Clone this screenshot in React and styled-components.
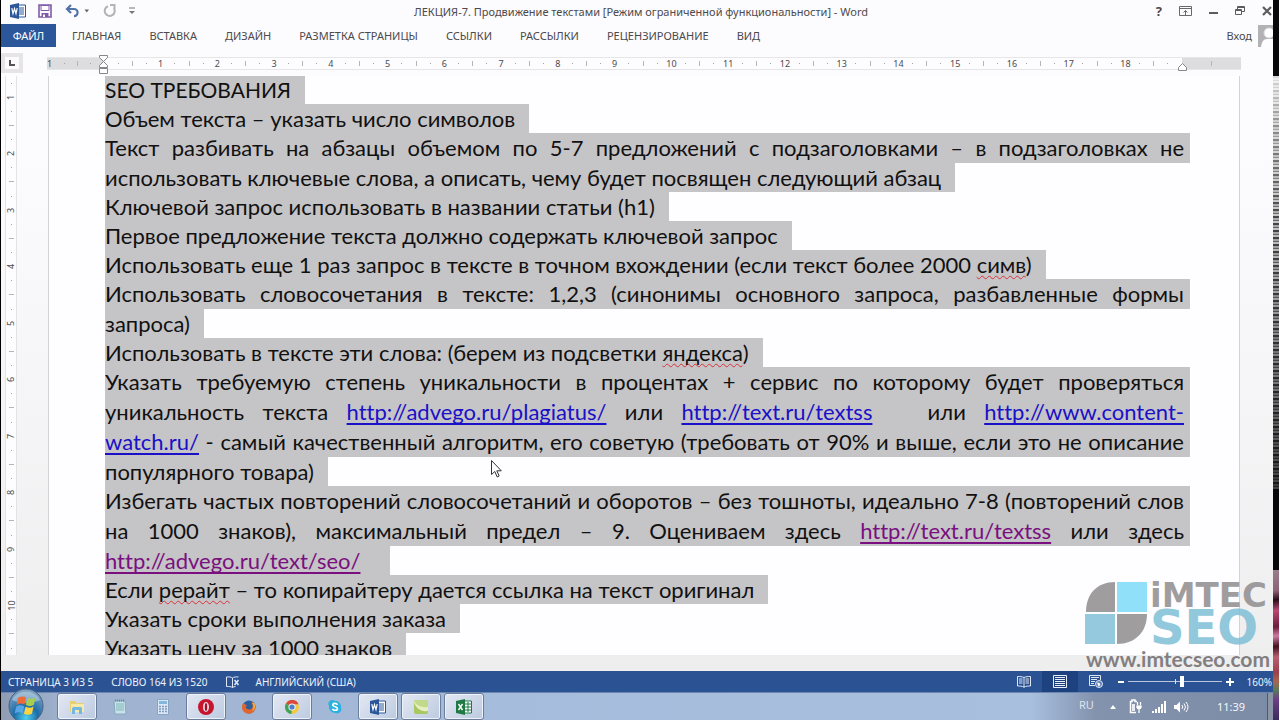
import styled, { createGlobalStyle, css } from "styled-components";

const GlobalStyle = createGlobalStyle`
  * { box-sizing: border-box; }
  body {
    margin: 0;
    background: #fff;
    font-family: "Noto Sans", "Open Sans", sans-serif;
    font-size: 11px;
    color: #4c4a4c;
  }
  button { font: inherit; color: inherit; border: 0; padding: 0; background: none; }
  svg { display: block; flex: none; }
`;

const Desktop = styled.div`
  display: flex;
  height: 100vh;
  min-height: 480px;
  padding-right: 1px;
  overflow: hidden;
`;
const Screen = styled.div`
  position: relative;
  flex: 1;
  min-width: 0;
  display: flex;
  flex-direction: column;
  border-left: 1px solid #000;
  background: linear-gradient(#fcfbfd 20%, #efeeef 92%);
  overflow: hidden;
`;
const Wallpaper = styled.div`
  flex: none;
  width: 6px;
  display: flex;
  flex-direction: column;
  background: #08080a;
`;
const Noise = styled.div`
  height: 413px;
  margin-top: 76px;
  background:
    linear-gradient(#fffc 0, #fff6 12%, #fff0 35%, #0003 55%, #000a 100%),
    repeating-linear-gradient(#444 0 2px, #a9a9a9 2px 4px, #666 4px 5px, #c5c5c5 5px 7px),
    #888;
`;
const Flower = styled.div`
  flex: 1;
  margin-top: 81px;
  background: linear-gradient(
    172deg,
    #9a7f8c 0, #8b6275 14%, #2a0d18 20%, #b9486f 27%, #6d1c3a 38%, #d07aa0 44%,
    #43101f 51%, #b8606f 58%, #9c3f4c 68%, #a8664f 74%, #5c7a58 80%, #6b3f86 86%, #3b2a5b 100%
  );
`;

/* title bar */
const TitleBar = styled.header`
  flex: none;
  height: 24px;
  display: flex;
  align-items: center;
  padding: 0 1px 2px 9px;
`;
const QuickAccess = styled.div`
  flex: 1;
  display: flex;
  align-items: center;
`;
const QuickButton = styled.button`
  margin-right: ${(p) => p.$gap || 12}px;
`;
const Title = styled.h1`
  margin: 0;
  font-size: 11px;
  font-weight: 400;
  white-space: nowrap;
`;
const WindowButtons = styled.div`
  flex: 1;
  display: flex;
  justify-content: flex-end;
  align-items: center;
  gap: 17px;
`;
const HelpButton = styled.button`
  font-size: 13px;
  font-weight: 700;
`;

/* ribbon tabs */
const Tabs = styled.nav`
  flex: none;
  height: 23px;
  display: flex;
  align-items: stretch;
`;
const FileTab = styled.button`
  width: 55px;
  margin-right: 2px;
  padding-bottom: 1px !important;
  background: #2b579a !important;
  color: #fff !important;
`;
const Tab = styled.button`
  padding: 0 14px 1px !important;
  white-space: nowrap;
`;
const SignIn = styled.button`
  margin-left: auto;
  display: flex;
  align-items: center;
  gap: 6px;
`;

/* rulers */
const RulerRow = styled.div`
  flex: none;
  height: 29px;
  display: flex;
  align-items: center;
  padding: 3px 32px 0 0;
`;
const TabSelector = styled.button`
  width: 22px;
  height: 20px;
  margin-right: 24px;
  border: 4px solid #e6e4e6 !important;
  background: #fbfafc !important;
  display: flex;
  align-items: center;
  justify-content: center;
`;
const Ruler = styled.div`
  position: relative;
  flex: 1;
  height: 13px;
  display: flex;
  border: 1px solid #e6e5e8;
  border-width: 1px 0;
  font-size: 9px;
`;
const Margin = styled.div`
  width: ${(p) => p.$w}px;
  display: flex;
  justify-content: ${(p) => (p.$left ? "space-between" : "space-around")};
  padding-right: ${(p) => (p.$left ? 13 : 0)}px;
  align-items: center;
  background: #dddcde;
`;
const Scale = styled.div`
  flex: 1;
  display: flex;
  align-items: center;
  padding: 0 7px;
  background: #fdfcfe;
`;
const Mark = styled.span`
  flex: 1 1 0;
  min-width: 0;
  min-height: 0;
  display: flex;
  align-items: center;
  justify-content: center;
  line-height: 11px;
`;
const Tick = styled.i`
  display: block;
  width: 1px;
  height: 5px;
  background: #b5b4b7;
  ${(p) => p.$dot && css`height: 1px; background: #a3a2a5;`}
`;
const Indents = styled.svg`
  position: absolute;
  left: ${(p) => p.$left};
  right: ${(p) => p.$right};
  top: ${(p) => p.$top}px;
`;
const Workspace = styled.main`
  flex: 1;
  min-height: 0;
  display: flex;
  padding-right: 33px;
`;
const SideRuler = styled.div`
  width: 12px;
  margin: 0 31px 0 4px;
  display: flex;
  flex-direction: column;
  align-items: center;
  border: 1px solid #e3e2e5;
  border-width: 0 1px;
  background: #fdfcfe;
  font-size: 9px;
`;
const Upright = styled.span`
  transform: rotate(-90deg);
`;

/* document */
const Page = styled.article`
  position: relative;
  flex: 1;
  min-width: 0;
  padding: 0 49px 0 56px;
  border: 1px solid #d3d2d5;
  border-width: 0 1px;
  background: #fefdff;
  font-family: Lato, sans-serif;
  font-size: 22px;
  font-variant-ligatures: none;
  color: #111;
  overflow: hidden;
`;
const Paragraph = styled.p`
  margin: 0;
`;
const Line = styled.span`
  display: block;
  width: fit-content;
  padding-right: ${(p) => p.$tail || 14}px;
  line-height: 29px;
  white-space: nowrap;
  background: #c5c4c6;
  ${(p) => p.$heading && css`font-size: 21px; line-height: 28px;`}
  ${(p) =>
    p.$full &&
    css`
      width: auto;
      padding-right: 6px;
      line-height: 30px;
      text-align: justify;
      text-align-last: justify;
    `}
`;
const Link = styled.a`
  color: ${(p) => (p.$visited ? "#7a0f80" : "#1a10c8")};
  text-decoration: underline 2px;
  text-underline-offset: 3px;
  text-decoration-skip-ink: none;
`;
const Typo = styled.span`
  text-decoration: underline wavy #d8323c 1px;
  text-underline-offset: 2px;
  text-decoration-skip-ink: none;
`;
const Pointer = styled.svg`
  position: absolute;
  left: 442px;
  top: 384px;
`;

/* logo over the corner of the page */
const Watermark = styled.div`
  position: absolute;
  left: calc(100% - 188px);
  bottom: 48px;
  width: 188px;
  color: #6f6c6d;
  font-weight: 700;
  white-space: nowrap;
  opacity: 0.85;
`;
const Brand = styled.div`
  display: flex;
  gap: 3px;
`;
const BrandName = styled.div`
  font-family: "DejaVu Sans", sans-serif;
  font-size: 34px;
  line-height: 26px;
  color: #8f8d8e;
`;
const BrandSeo = styled.div`
  font-size: 48px;
  line-height: 38px;
  color: #80bfd6;
`;
const BrandUrl = styled.div`
  padding-left: 1px;
  font-family: Lato, sans-serif;
  font-size: 21px;
  line-height: 26px;
`;

/* status bar */
const StatusSpace = styled.div`
  flex: none;
  height: 16px;
`;
const StatusBar = styled.footer`
  flex: none;
  height: 21px;
  display: flex;
  align-items: center;
  padding-left: 7px;
  background: #2b5394;
  color: #eef2fa;
  font-size: 10px;
  white-space: nowrap;
`;
const StatusItem = styled.button`
  margin-right: ${(p) => p.$gap || 18}px;
`;
const Language = styled(StatusItem)`
  margin-right: auto;
`;
const ViewButton = styled.button`
  width: 36px;
  height: 21px;
  display: flex;
  align-items: center;
  justify-content: center;
  background: ${(p) => (p.$active ? "#1e427f" : "none")} !important;
`;
const ZoomGroup = styled.div`
  display: flex;
  align-items: center;
  gap: 4px;
  margin-left: 4px;
`;
const ZoomSlider = styled.input`
  appearance: none;
  width: 94px;
  height: 12px;
  margin: 0;
  background:
    linear-gradient(#dbe3f1, #dbe3f1) 47px 50% / 1px 5px no-repeat,
    linear-gradient(#b9c8e0, #b9c8e0) 0 50% / 100% 1px no-repeat;
  &::-webkit-slider-thumb {
    appearance: none;
    width: 4px;
    height: 11px;
    background: #fff;
  }
`;
const ZoomValue = styled.button`
  width: 39px;
  padding-right: 1px !important;
  text-align: right;
`;

/* taskbar */
const Taskbar = styled.div`
  flex: none;
  height: 28px;
  display: flex;
  align-items: stretch;
  border-top: 1px solid #6d86ad;
  background: linear-gradient(90deg, #8f9db3 0, #9fb2cf 5%, #a6bcdc 40%, #a8bfde 81%, #8393ae 86%, #7c8ba6 100%);
`;
const StartButton = styled.button`
  align-self: flex-start;
  width: 52px;
  margin: -5px 4px 0 0;
  padding-left: 7px !important;
`;
const TaskButton = styled.button`
  width: 40px;
  margin-right: 3px;
  display: flex;
  align-items: center;
  justify-content: center;
  border-radius: 3px;
  ${(p) =>
    p.$open &&
    css`
      border: 1px solid #6a7d9c !important;
      background: linear-gradient(135deg, #e3e8f3, #bccae0) !important;
      box-shadow: inset 0 0 0 1px #eef2f9;
    `}
`;
const Tray = styled.div`
  margin-left: auto;
  display: flex;
  align-items: center;
  color: #f3f6fb;
`;
const InputLanguage = styled.button`
  margin-right: 16px;
  padding-bottom: 5px !important;
  color: #dde3ee !important;
`;
const TrayButton = styled.button`
  margin-right: ${(p) => p.$gap}px;
`;
const ShowDesktop = styled.button`
  align-self: stretch;
  width: 6px;
  border-left: 1px solid #4d5a70 !important;
  background: #8c95a6 !important;
`;

const tabs = ["ГЛАВНАЯ", "ВСТАВКА", "ДИЗАЙН", "РАЗМЕТКА СТРАНИЦЫ", "ССЫЛКИ", "РАССЫЛКИ", "РЕЦЕНЗИРОВАНИЕ", "ВИД"];

// four marks per centimetre: quarter dot, half tick, quarter dot, number
const markAt = (q) => (q % 4 === 0 ? q / 4 : q % 2 === 0 ? "tick" : "dot");
const topMarks = Array.from({ length: 75 }, (_, i) => markAt(i + 1));
const sideMarks = Array.from({ length: 41 }, (_, i) => markAt(i + 3));

const WordIcon = ({ size = 16 }) => (
  <svg width={size} height={size} viewBox="0 0 16 16">
    <path d="M8 2h7.5v12H8z" fill="#fff" stroke="#2b579a" />
    <path d="M9 5h5M9 7h5M9 9h5M9 11h5" stroke="#2b579a" />
    <path d="M0 2l9-2v16l-9-2z" fill="#2b579a" />
    <path d="M1.8 5.2l1.2 5.4 1.5-5 1.5 5 1.2-5.4" fill="none" stroke="#fff" strokeWidth="1.2" />
  </svg>
);
const ExcelIcon = () => (
  <svg width="16" height="16" viewBox="0 0 16 16">
    <path d="M8 2h7.5v12H8z" fill="#fff" stroke="#1f7a45" />
    <path d="M9 5h6M9 8h6M9 11h6M12 3v10" stroke="#1f7a45" />
    <path d="M0 2l9-2v16l-9-2z" fill="#1f7a45" />
    <path d="M2.5 5l4 6M6.5 5l-4 6" stroke="#fff" strokeWidth="1.4" />
  </svg>
);
const SaveIcon = () => (
  <svg width="14" height="14" viewBox="0 0 14 14">
    <path d="M1 1h12v12H1z" fill="#fff" stroke="#7f5aa8" strokeWidth="1.6" />
    <path d="M3 1.5h8v5H3z" fill="#fff" stroke="#7f5aa8" />
    <path d="M3.5 9h7v4h-7z" fill="#7f5aa8" />
    <path d="M5 10.5h2V13H5z" fill="#fff" />
  </svg>
);
const UndoIcon = () => (
  <svg width="24" height="14" viewBox="0 0 24 14" fill="none">
    <path d="M6 1L2 5l4 4M2.500 5H9a3.600 3.600 0 0 1 0 7.200" stroke="#5273a8" strokeWidth="2.200" />
    <path d="M19.500 5.500h4.500l-2.200 3z" fill="#666" />
  </svg>
);
const RedoIcon = () => (
  <svg width="14" height="14" viewBox="0 0 14 14" fill="none" stroke="#b3b2b5" strokeWidth="2">
    <path d="M5 2.200A5 5 0 1 0 10.800 4M7 1h4.500v4.500" />
  </svg>
);
const CustomizeIcon = () => (
  <svg width="6" height="8" viewBox="0 0 6 8">
    <path d="M0 1h6" stroke="#777" />
    <path d="M0 4h6L3 7z" fill="#777" />
  </svg>
);
const RibbonIcon = () => (
  <svg width="13" height="10" viewBox="0 0 13 10" fill="none" stroke="#6a686b">
    <path d="M.5.5h12v9H.5zM.5 2.500h12M6.500 9V4.500M4.500 6.500l2-2 2 2" />
  </svg>
);
const MinimizeIcon = () => (
  <svg width="9" height="9" viewBox="0 0 9 9"><path d="M0 6h9" stroke="#5d5b5e" strokeWidth="2" /></svg>
);
const RestoreIcon = () => (
  <svg width="10" height="10" viewBox="0 0 10 10" fill="none" stroke="#5d5b5e">
    <path d="M.5 3.500h6v5h-6zM.5 4.500h6M2.500 3V.500h7v5H7M2.500 1.500h7" />
  </svg>
);
const CloseIcon = () => (
  <svg width="10" height="10" viewBox="0 0 10 10"><path d="M1 1l8 8M9 1L1 9" stroke="#5d5b5e" strokeWidth="2.200" /></svg>
);
const AvatarIcon = () => (
  <svg width="15" height="22" viewBox="0 0 15 22">
    <path d="M0 0h15v22H0z" fill="#fdfcfe" />
    <path d="M0 0h15v14H9c-4 0-5 3-6 8H0z" fill="#b2b1b4" />
    <circle cx="11" cy="8" r="5" fill="#fff" stroke="#dcdbdd" />
  </svg>
);
const ProofIcon = () => (
  <svg width="14" height="12" viewBox="0 0 14 12" fill="none" stroke="#dfe7f4">
    <path d="M6.500 2C5 .8 3 .8.5 1v9.500c2.500 0 4.500 0 6 1zM6.500 2C8 .8 10 .8 12.500 1M6.500 11.500c1-.6 2-1 3-1" />
    <path d="M8.500 4l4 5M12.500 4l-4 5" strokeWidth="1.500" />
  </svg>
);
const ReadIcon = () => (
  <svg width="14" height="12" viewBox="0 0 14 12" fill="none" stroke="#dfe7f4">
    <path d="M7 1.500C5 .5 3 .5.5.5v9.500c2.500 0 4.500 0 6.500 1.200 2-1.200 4-1.200 6.500-1.200V.5C11 .5 9 .5 7 1.500zM7 1.500v10M2 3h3.500M2 5h3.500M2 7h3.500M8.500 3H12M8.500 5H12M8.500 7H12" />
  </svg>
);
const PrintIcon = () => (
  <svg width="14" height="13" viewBox="0 0 14 13" fill="none" stroke="#e8eef8">
    <path d="M.5.5h13v12H.5zM2 2.500h10M2 4.500h10M2 6.500h10M2 8.500h10M2 10.500h10" />
  </svg>
);
const WebIcon = () => (
  <svg width="14" height="13" viewBox="0 0 14 13" fill="none" stroke="#dfe7f4">
    <path d="M6 10.500H.5V.5h11V5M2 2.500h8M2 4.500h6M2 6.500h4M2 8.500h3" />
    <circle cx="10" cy="9" r="3.500" fill="#5d7eb5" />
    <path d="M8 7.500l2.500.5 1 2-2 1.500z" fill="#fff" stroke="none" />
  </svg>
);
const StartOrb = () => (
  <svg width="36" height="36" viewBox="0 0 36 36">
    <defs>
      <radialGradient id="orb" cx=".5" cy=".85" r=".8">
        <stop offset="0" stopColor="#4fd0ef" />
        <stop offset=".45" stopColor="#1d6ca8" />
        <stop offset="1" stopColor="#7fa3c4" />
      </radialGradient>
    </defs>
    <circle cx="18" cy="18" r="17" fill="url(#orb)" stroke="#48617f" />
    <path d="M4 12a15 13 0 0 1 28 0c-8 4-20 4-28 0z" fill="#fff" opacity=".35" />
    <path d="M10 10c3-2 5-2 8-.5l-1.500 7c-3-1.500-5-1.500-8 .3z" fill="#ee6a38" />
    <path d="M19.500 10c3 1.500 5 1.500 8-.5l-1.700 7.500c-3 1.500-5 1.500-8 0z" fill="#a5cf4c" />
    <path d="M8.200 18.500c3-1.700 5-1.700 8-.2l-1.600 7c-3-1.500-5-1.500-8 .2z" fill="#58a6e6" />
    <path d="M17.600 18.700c3 1.500 5 1.500 8-.2l-1.700 7.200c-3 1.500-5 1.500-8 0z" fill="#fbd23f" />
  </svg>
);
const FolderIcon = () => (
  <svg width="16" height="14" viewBox="0 0 16 14">
    <path d="M1 1h5l1.500 2H15v9H1z" fill="#e8cf74" />
    <path d="M2 4h13v8H2z" fill="#f7e9a8" />
    <path d="M3 14V9c0-1.500 1-2 2-2h6c1.500 0 2 .5 2 2v5h-3v-4H6v4z" fill="#74b8e2" />
  </svg>
);
const NotepadIcon = () => (
  <svg width="14" height="16" viewBox="0 0 14 16">
    <path d="M1 2h11l1 13H2z" fill="#c9e3ea" stroke="#86a9bd" />
    <path d="M3 5h8M3 7h8M3 9h8M3 11h8" stroke="#82b5ba" />
    <path d="M2 1.500h10" stroke="#68879c" strokeWidth="2" strokeDasharray="1 1" />
  </svg>
);
const CalcIcon = () => (
  <svg width="12" height="16" viewBox="0 0 12 16">
    <path d="M.5.5h11v15H.5z" fill="#dce8f5" stroke="#88a3c4" />
    <path d="M2 2h8v3H2z" fill="#83b7dc" />
    <path d="M2 7.500h8M2 10h8M2 12.500h8" stroke="#7e99bb" strokeWidth="1.500" strokeDasharray="2 1" />
  </svg>
);
const OperaIcon = () => (
  <svg width="16" height="16" viewBox="0 0 16 16">
    <circle cx="8" cy="8" r="8" fill="#c8152e" />
    <ellipse cx="8" cy="8" rx="3" ry="5" fill="#e8dbe3" />
    <ellipse cx="8" cy="8" rx="1.200" ry="4" fill="#a80e26" />
  </svg>
);
const FirefoxIcon = () => (
  <svg width="14" height="14" viewBox="0 0 14 14">
    <circle cx="7" cy="7" r="6.500" fill="#2b5e9e" />
    <path d="M1 3c1 1.500 3 1 4 2.500L3.500 7c1 3 5 3.500 7 .5C11 5 10 3 9 1.500 13 3 14.500 7 12.500 10.500c-3 5-10 4-12-.5-.8-2.500-.5-5 .5-7z" fill="#e0662b" />
    <path d="M10 3c2 2 2 5 0 8 3-1 4-5 2-8z" fill="#f5b83f" />
  </svg>
);
const ChromeIcon = () => (
  <svg width="14" height="14" viewBox="1 1 14 14">
    <circle cx="8" cy="8" r="7" fill="#f2c83c" />
    <path d="M8 8L1.900 4.500A7 7 0 0 1 14.500 5.200H8z" fill="#d94a3d" />
    <path d="M8 8l-.5 7A7 7 0 0 1 1.900 4.500z" fill="#40a25a" />
    <circle cx="8" cy="8" r="3.600" fill="#f2f4f7" />
    <circle cx="8" cy="8" r="2.600" fill="#4c7fd0" />
  </svg>
);
const SkypeIcon = () => (
  <svg width="16" height="16" viewBox="0 0 16 16">
    <path d="M4.500 1a4 4 0 0 1 3 .8A6.200 6.200 0 0 1 14 9a4 4 0 0 1-5.500 5A6.200 6.200 0 0 1 2 7a4 4 0 0 1 2.500-6z" fill="#2ab1e0" />
    <path d="M10.500 5.800C9.500 3.800 5.800 4 5.800 6c0 2.300 4.700 1.300 4.700 3.700 0 2-4.200 2.200-5 .2" fill="none" stroke="#fff" strokeWidth="1.600" />
  </svg>
);
const LeafIcon = () => (
  <svg width="16" height="16" viewBox="0 0 16 16">
    <rect x="1" y="1" width="14" height="14" rx="2" fill="#a9c862" />
    <path d="M1 2c1 7 7 11 14 10V3c0-1-1-2-2-2H2z" fill="#c3d98a" />
    <path d="M1 2c3 5 8 7 14 6v4C8 13 2 9 1 2z" fill="#e6efc2" />
  </svg>
);
const PowerIcon = () => (
  <svg width="13" height="15" viewBox="0 0 13 15" fill="none" stroke="#fff">
    <path d="M7 13.500H1.500v-11H3V1h3v1.500h2" strokeWidth="1.500" />
    <path d="M3 5h3v7H3z" fill="#e8edf5" stroke="none" />
    <path d="M7 6h6v3l-2 2H9L7 9z" fill="#fff" stroke="#52617a" strokeWidth=".5" />
    <path d="M8.500 3v3M11.500 3v3M10 11v3" strokeWidth="1.300" />
  </svg>
);
const SignalIcon = () => (
  <svg width="14" height="12" viewBox="0 0 14 12" fill="#fff">
    <path d="M0 10h2v2H0zM3 8h2v4H3zM6 6h2v6H6zM9 3h2v9H9zM12 0h2v12h-2z" />
  </svg>
);
const SoundIcon = () => (
  <svg width="15" height="12" viewBox="0 0 15 12" fill="none" stroke="#fff">
    <path d="M0 4h2.500L6 .5v11L2.500 8H0z" fill="#fff" stroke="none" />
    <path d="M8 4q1.500 2 0 4M10 2.500q3 3.500 0 7M12 1q4 5 0 10" />
  </svg>
);
const BrandMark = () => (
  <svg width="62" height="62" viewBox="0 0 62 62">
    <path d="M1 30C1 12 12 0 30 0v30z" fill="#8f8d8e" />
    <path d="M32 0h30v30H32z" fill="#7fdcf8" />
    <path d="M0 32h30v30H0z" fill="#83c0d8" />
    <path d="M32 32h30c0 18-12 30-30 30z" fill="#8f8d8e" />
  </svg>
);

const Marks = ({ marks, upright }) =>
  marks.map((mark, i) => {
    const content = typeof mark === "number" ? mark : <Tick $dot={mark === "dot"} />;
    return <Mark key={i}>{upright ? <Upright>{content}</Upright> : content}</Mark>;
  });

const TopRuler = () => (
  <RulerRow>
    <TabSelector aria-label="Табуляция">
      <svg width="6" height="6" viewBox="0 0 6 6"><path d="M1 0v5h5" fill="none" stroke="#555" strokeWidth="2" /></svg>
    </TabSelector>
    <Ruler>
      <Margin $w={57} $left>
        <span>1</span><Tick $dot /><Tick /><Tick $dot />
      </Margin>
      <Scale>
        <Marks marks={topMarks} />
      </Scale>
      <Margin $w={59}><Tick /></Margin>
      <Indents $left="52px" $top={-3} width="9" height="20" viewBox="0 0 9 20" fill="#fff" stroke="#88868a">
        <path d="M.5.5h8v2l-4 4-4-4zM4.500 6.500l4 4v2h-8v-2zM.5 13.500h8v5h-8z" />
      </Indents>
      <Indents $right="54px" $top={5} width="9" height="8" viewBox="0 0 9 8" fill="#fff" stroke="#88868a">
        <path d="M4.500.5l4 4v3h-8v-3z" />
      </Indents>
    </Ruler>
  </RulerRow>
);

const DocumentText = () => (
  <>
    <Paragraph><Line $heading>SEO ТРЕБОВАНИЯ</Line></Paragraph>
    <Paragraph><Line>Объем текста – указать число символов</Line></Paragraph>
    <Paragraph>
      <Line $full>Текст разбивать на абзацы объемом по 5-7 предложений с подзаголовками – в подзаголовках не</Line>
      <Line>использовать ключевые слова, а описать, чему будет посвящен следующий абзац</Line>
    </Paragraph>
    <Paragraph><Line>Ключевой запрос использовать в названии статьи (h1)</Line></Paragraph>
    <Paragraph><Line>Первое предложение текста должно содержать ключевой запрос</Line></Paragraph>
    <Paragraph>
      <Line>Использовать еще 1 раз запрос в тексте в точном вхождении (если текст более 2000 <Typo>симв</Typo>)</Line>
    </Paragraph>
    <Paragraph>
      <Line $full>Использовать словосочетания в тексте: 1,2,3 (синонимы основного запроса, разбавленные формы</Line>
      <Line>запроса)</Line>
    </Paragraph>
    <Paragraph><Line>Использовать в тексте эти слова: (берем из подсветки <Typo>яндекса</Typo>)</Line></Paragraph>
    <Paragraph>
      <Line $full>Указать требуемую степень уникальности в процентах + сервис по которому будет проверяться</Line>
      <Line $full>
        уникальность текста <Link href="#plagiatus">http://advego.ru/plagiatus/</Link> или{" "}
        <Link href="#textss">http://text.ru/textss</Link>&nbsp;&nbsp; или <Link href="#watch">http://www.content-</Link>
      </Line>
      <Line $full>
        <Link href="#watch">watch.ru/</Link> - самый качественный алгоритм, его советую (требовать от 90% и выше, если это не описание
      </Line>
      <Line>популярного товара)</Line>
    </Paragraph>
    <Paragraph>
      <Line $full>Избегать частых повторений словосочетаний и оборотов – без тошноты, идеально 7-8 (повторений слов</Line>
      <Line $full>
        на 1000 знаков), максимальный предел – 9. Оцениваем здесь{" "}
        <Link $visited href="#textss">http://text.ru/textss</Link> или здесь
      </Line>
      <Line $tail={30}><Link $visited href="#seo">http://advego.ru/text/seo/</Link></Line>
    </Paragraph>
    <Paragraph><Line>Если <Typo>рерайт</Typo> – то копирайтеру дается ссылка на текст оригинал</Line></Paragraph>
    <Paragraph><Line>Указать сроки выполнения заказа</Line></Paragraph>
    <Paragraph><Line>Указать цену за 1000 знаков</Line></Paragraph>
  </>
);

const App = () => (
  <Desktop>
    <GlobalStyle />
    <Screen>
      <TitleBar>
        <QuickAccess>
          <QuickButton aria-label="Word"><WordIcon /></QuickButton>
          <QuickButton aria-label="Сохранить" $gap={13}><SaveIcon /></QuickButton>
          <QuickButton aria-label="Отменить" $gap={14}><UndoIcon /></QuickButton>
          <QuickButton aria-label="Повторить"><RedoIcon /></QuickButton>
          <QuickButton aria-label="Настройка панели"><CustomizeIcon /></QuickButton>
        </QuickAccess>
        <Title>ЛЕКЦИЯ-7. Продвижение текстами [Режим ограниченной функциональности] - Word</Title>
        <WindowButtons>
          <HelpButton aria-label="Справка">?</HelpButton>
          <button aria-label="Параметры ленты"><RibbonIcon /></button>
          <button aria-label="Свернуть"><MinimizeIcon /></button>
          <button aria-label="Восстановить"><RestoreIcon /></button>
          <button aria-label="Закрыть"><CloseIcon /></button>
        </WindowButtons>
      </TitleBar>
      <Tabs>
        <FileTab>ФАЙЛ</FileTab>
        {tabs.map((tab) => (
          <Tab key={tab}>{tab}</Tab>
        ))}
        <SignIn>Вход <AvatarIcon /></SignIn>
      </Tabs>
      <TopRuler />
      <Workspace>
        <SideRuler><Marks marks={sideMarks} upright /></SideRuler>
        <Page>
          <DocumentText />
          <Pointer width="11" height="18" viewBox="0 0 11 18">
            <path d="M.5.5v14l3.300-3 2.400 5.500 2-1-2.400-5.200h4.500z" fill="#fff" stroke="#333" />
          </Pointer>
        </Page>
      </Workspace>
      <StatusSpace />
      <StatusBar>
        <StatusItem>СТРАНИЦА 3 ИЗ 5</StatusItem>
        <StatusItem>СЛОВО 164 ИЗ 1520</StatusItem>
        <StatusItem aria-label="Правописание" $gap={16}><ProofIcon /></StatusItem>
        <Language>АНГЛИЙСКИЙ (США)</Language>
        <ViewButton aria-label="Режим чтения"><ReadIcon /></ViewButton>
        <ViewButton aria-label="Разметка страницы" $active><PrintIcon /></ViewButton>
        <ViewButton aria-label="Веб-документ"><WebIcon /></ViewButton>
        <ZoomGroup>
          <button aria-label="Уменьшить">
            <svg width="6" height="8" viewBox="0 0 6 8"><path d="M0 4h6" stroke="#fff" strokeWidth="2" /></svg>
          </button>
          <ZoomSlider type="range" aria-label="Масштаб" min="0" max="100" defaultValue="58" />
          <button aria-label="Увеличить">
            <svg width="8" height="8" viewBox="0 0 8 8"><path d="M0 4h8M4 0v8" stroke="#fff" strokeWidth="2" /></svg>
          </button>
        </ZoomGroup>
        <ZoomValue>160%</ZoomValue>
      </StatusBar>
      <Taskbar>
        <StartButton aria-label="Пуск"><StartOrb /></StartButton>
        <TaskButton $open aria-label="Проводник"><FolderIcon /></TaskButton>
        <TaskButton aria-label="Блокнот"><NotepadIcon /></TaskButton>
        <TaskButton aria-label="Калькулятор"><CalcIcon /></TaskButton>
        <TaskButton $open aria-label="Opera"><OperaIcon /></TaskButton>
        <TaskButton aria-label="Firefox"><FirefoxIcon /></TaskButton>
        <TaskButton $open aria-label="Chrome"><ChromeIcon /></TaskButton>
        <TaskButton aria-label="Skype"><SkypeIcon /></TaskButton>
        <TaskButton $open aria-label="Word"><WordIcon /></TaskButton>
        <TaskButton $open aria-label="Заметки"><LeafIcon /></TaskButton>
        <TaskButton $open aria-label="Excel"><ExcelIcon /></TaskButton>
        <Tray>
          <InputLanguage>RU</InputLanguage>
          <TrayButton $gap={13} aria-label="Скрытые значки">
            <svg width="6" height="4" viewBox="0 0 6 4"><path d="M3 0l3 4H0z" fill="#fff" /></svg>
          </TrayButton>
          <TrayButton $gap={10} aria-label="Питание"><PowerIcon /></TrayButton>
          <TrayButton $gap={8} aria-label="Сеть"><SignalIcon /></TrayButton>
          <TrayButton $gap={28} aria-label="Громкость"><SoundIcon /></TrayButton>
          <TrayButton $gap={22}>11:39</TrayButton>
          <ShowDesktop aria-label="Показать рабочий стол" />
        </Tray>
      </Taskbar>
      <Watermark>
        <Brand>
          <BrandMark />
          <BrandName>
            iMTEC
            <BrandSeo>SEO</BrandSeo>
          </BrandName>
        </Brand>
        <BrandUrl>www.imtecseo.com</BrandUrl>
      </Watermark>
    </Screen>
    <Wallpaper>
      <Noise />
      <Flower />
    </Wallpaper>
  </Desktop>
);

export default App;
